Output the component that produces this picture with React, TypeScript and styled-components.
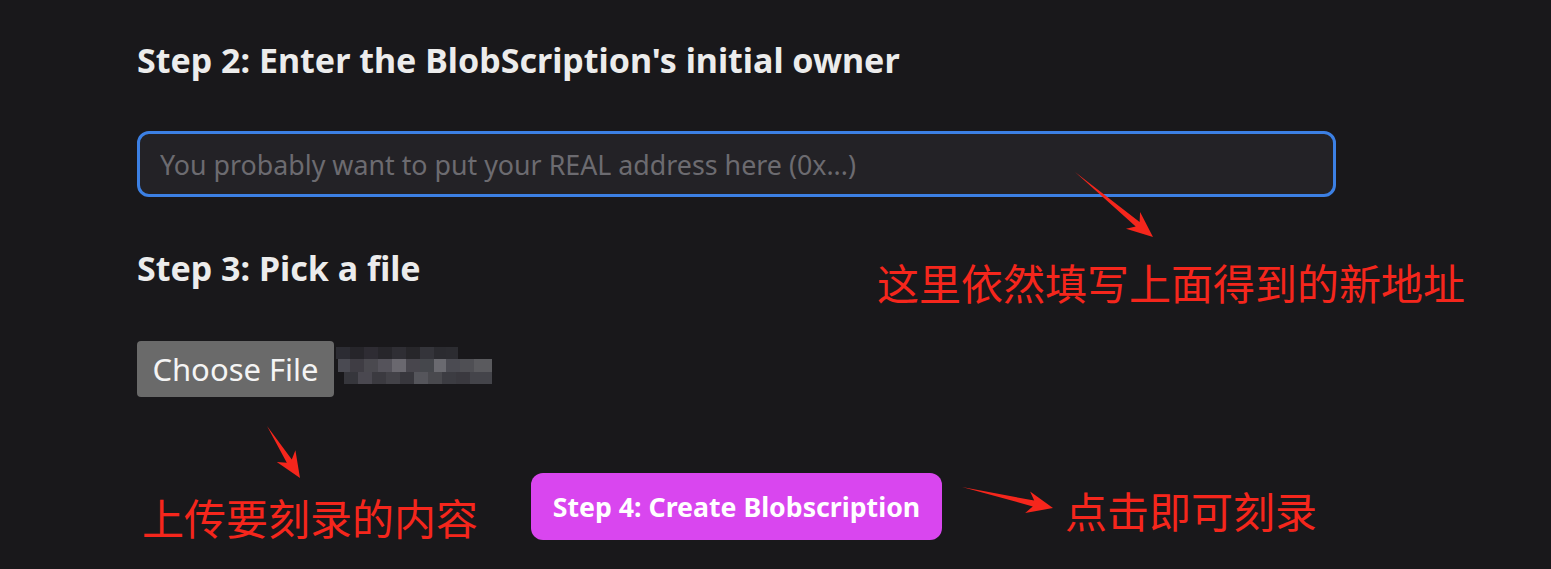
import React from "react";
import styled, { createGlobalStyle } from "styled-components";

const Global = createGlobalStyle`
  html, body { margin: 0; padding: 0; background: #19181b; }
  body { width: 1551px; height: 569px; overflow: hidden; font-family: "Noto Sans", "Open Sans", sans-serif; }
`;

const Page = styled.div`
  position: relative;
  width: 1551px;
  height: 569px;
  box-sizing: border-box;
  padding: 38px 0 0 137px;
  display: flex;
  flex-direction: column;
  align-items: flex-start;
`;

const Heading = styled.h2`
  margin: 0;
  font-family: "Noto Sans", sans-serif;
  font-weight: 700;
  font-size: 34px;
  line-height: 44px;
  color: #ececec;
`;

const AddressInput = styled.input`
  margin-top: 49px;
  width: 1199px;
  height: 66px;
  box-sizing: border-box;
  border: 3px solid #3c80e4;
  border-radius: 12px;
  background: #232226;
  padding: 0 20px;
  font-family: "Noto Sans", sans-serif;
  font-size: 26.8px;
  color: #ddd;
  outline: none;
  &::placeholder { color: #6c6b70; }
`;

const Section = styled.div<{ $top: number }>`
  margin-top: ${(p) => p.$top}px;
`;

const FileRow = styled.div`
  margin-top: 51px;
  display: flex;
  align-items: center;
`;

const ChooseButton = styled.button`
  height: 56px;
  width: 197px;
  border: none;
  border-radius: 4px;
  background: #6a6a6a;
  color: #f4f4f4;
  font-family: "Noto Sans", sans-serif;
  font-size: 31px;
  padding: 0;
  cursor: pointer;
`;

const CreateButton = styled.button`
  margin: 76px 0 0 394px;
  width: 411px;
  height: 67px;
  border: none;
  border-radius: 12px;
  background: #d946ef;
  color: #fff;
  font-family: "Noto Sans", sans-serif;
  font-weight: 700;
  font-size: 26.7px;
  padding: 0;
  cursor: pointer;
`;

const Note = styled.div<{ $x: number; $y: number }>`
  position: absolute;
  left: ${(p) => p.$x}px;
  top: ${(p) => p.$y}px;
  font-family: "Noto Sans CJK SC", sans-serif;
  font-size: 42px;
  line-height: 52px;
  color: #f5261c;
  white-space: nowrap;
`;

const ArrowSvg = styled.svg`
  position: absolute;
  left: 0;
  top: 0;
  pointer-events: none;
`;

function arrowPoints(x1: number, y1: number, x2: number, y2: number) {
  const dx = x2 - x1, dy = y2 - y1;
  const L = Math.hypot(dx, dy);
  const ux = dx / L, uy = dy / L;
  const nx = -uy, ny = ux;
  const head = 26, neck = 3, barb = 11;
  const bx = x2 - ux * head, by = y2 - uy * head;
  const nbx = x2 - ux * (head - 6), nby = y2 - uy * (head - 6);
  const pts = [
    [x1, y1],
    [nbx + nx * neck, nby + ny * neck],
    [bx + nx * barb, by + ny * barb],
    [x2, y2],
    [bx - nx * barb, by - ny * barb],
    [nbx - nx * neck, nby - ny * neck],
  ];
  return pts.map((p) => p.map((v) => v.toFixed(1)).join(",")).join(" ");
}

const blocks: [number, number, number, number, string][] = [
  [336, 347, 14, 12, "#2c2c33"], [350, 347, 14, 12, "#26252a"], [364, 347, 14, 12, "#2e2c33"],
  [378, 347, 14, 12, "#27262b"], [392, 347, 14, 12, "#2f2e34"], [406, 347, 14, 12, "#27262a"],
  [420, 347, 14, 12, "#34343a"], [434, 347, 12, 12, "#2b2b30"], [446, 347, 12, 12, "#2c2c31"],
  [338, 359, 12, 13, "#4a4a52"], [350, 359, 14, 13, "#3f3d44"], [364, 359, 14, 13, "#4a494f"],
  [378, 359, 14, 13, "#55535b"], [392, 359, 14, 13, "#6a686f"], [406, 359, 14, 13, "#48464d"],
  [420, 359, 14, 13, "#45474c"], [434, 359, 12, 13, "#6a6a70"], [446, 359, 14, 13, "#4b4b52"],
  [460, 359, 14, 13, "#4f4f54"], [474, 359, 18, 13, "#5a5a5e"],
  [344, 372, 14, 12, "#36363c"], [358, 372, 14, 12, "#4a4850"], [372, 372, 14, 12, "#3b3a40"],
  [386, 372, 14, 12, "#434248"], [400, 372, 14, 12, "#38373d"], [414, 372, 14, 12, "#55555b"],
  [428, 372, 14, 12, "#49494e"], [442, 372, 14, 12, "#3c3c42"], [456, 372, 14, 12, "#3a393f"],
  [470, 372, 22, 12, "#44444a"],
];

export default function App() {
  return (
    <>
      <Global />
      <Page>
        <Heading>Step 2: Enter the BlobScription's initial owner</Heading>
        <AddressInput placeholder="You probably want to put your REAL address here (0x...)" />
        <Section $top={49}>
          <Heading>Step 3: Pick a file</Heading>
        </Section>
        <FileRow>
          <ChooseButton>Choose File</ChooseButton>
        </FileRow>
        <CreateButton>Step 4: Create Blobscription</CreateButton>

        <ArrowSvg width="1551" height="569" viewBox="0 0 1551 569">
          {blocks.map(([x, y, w, h, c], i) => (
            <rect key={i} x={x} y={y} width={w} height={h} fill={c} />
          ))}
          <polygon points={arrowPoints(1075, 172, 1153, 237)} fill="#f5261c" />
          <polygon points={arrowPoints(267, 426, 300, 478)} fill="#f5261c" />
          <polygon points={arrowPoints(962, 487, 1053, 508)} fill="#f5261c" />
        </ArrowSvg>
        <Note $x={877} $y={256}>这里依然填写上面得到的新地址</Note>
        <Note $x={142} $y={491}>上传要刻录的内容</Note>
        <Note $x={1065} $y={484}>点击即可刻录</Note>
      </Page>
    </>
  );
}
